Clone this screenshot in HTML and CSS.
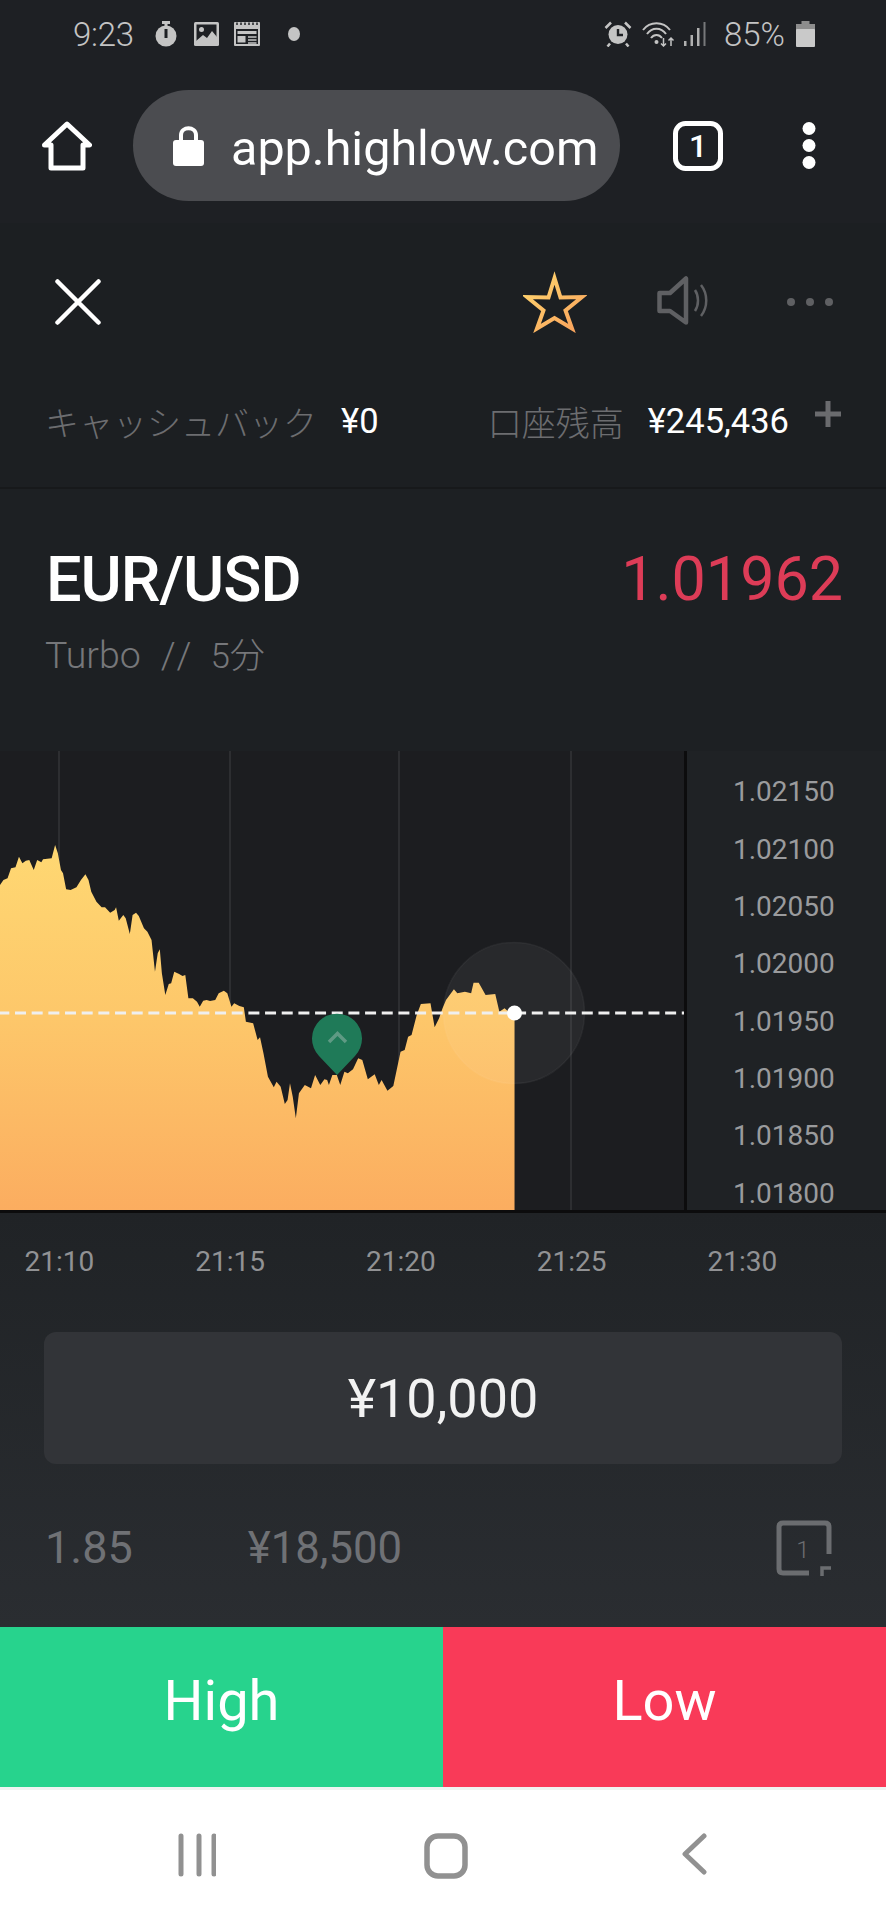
FILE: index.html
```html
<!DOCTYPE html>
<html lang="ja">
<head>
<meta charset="utf-8">
<title>EUR/USD Turbo</title>
<link rel="stylesheet" href="styles.css">
</head>
<body>
<div class="phone">
  <div class="status">
    <div class="status-group">
      <span class="clock">9:23</span>
      <svg class="st-icon i-watch" width="22" height="26" viewBox="0 0 22 26"><rect x="7" y="0" width="8" height="3" fill="#c4c4c4"/><rect x="9.5" y="2" width="3" height="4" fill="#c4c4c4"/><circle cx="11" cy="15" r="10.5" fill="#c4c4c4"/><rect x="9.5" y="8" width="3" height="9" fill="#1e2024"/></svg>
      <svg class="st-icon i-image" width="25" height="24" viewBox="0 0 25 24"><rect width="25" height="24" rx="1.5" fill="#c4c4c4"/><rect x="2.5" y="2.5" width="20" height="19" fill="#1e2024"/><circle cx="7.5" cy="7.5" r="2.5" fill="#c4c4c4"/><path d="M2 22 V19 L9 13 L13 16 L18 9 L23 15 V22 Z" fill="#c4c4c4"/></svg>
      <svg class="st-icon i-cal" width="26" height="24" viewBox="0 0 26 24"><rect width="26" height="24" rx="1" fill="#c4c4c4"/><rect x="2" y="7" width="22" height="15" fill="#1e2024"/><path d="M3 0.5 V3 M7 0.5 V3 M11 .5 V3 M15 .5 V3 M19 .5 V3 M23 .5 V3" stroke="#1e2024" stroke-width="1.5"/><rect x="3.5" y="9" width="19" height="3" fill="#c4c4c4"/><rect x="3.5" y="14" width="8" height="6.5" fill="#c4c4c4"/><path d="M14 15 H22.5 M14 18 H22.5 M14 21 H22.5" stroke="#c4c4c4" stroke-width="1.6"/></svg>
      <span class="st-dot"></span>
    </div>
    <div class="status-group">
      <svg class="st-icon i-alarm" width="28" height="26" viewBox="0 0 28 26"><circle cx="14" cy="13.500" r="9.500" fill="#c4c4c4"/><path d="M14 8 V14 H19" fill="none" stroke="#1e2024" stroke-width="2.400"/><path d="M1.500 7 L7 1.500 M26.500 7 L21 1.500 M6 22.500 L3.500 25.500 M22 22.500 L24.500 25.500" stroke="#c4c4c4" stroke-width="2.500" fill="none"/></svg>
      <svg class="st-icon i-wifi" width="33" height="26" viewBox="0 0 33 26" fill="none" stroke="#c4c4c4" stroke-width="2"><path d="M1 9 C8 0 21 0 28 9"/><path d="M5 13 C10 6 19 6 24 13"/><path d="M9 17 C12 13 17 13 20 17"/><circle cx="14.500" cy="21" r="2" fill="#c4c4c4" stroke="none"/><path d="M21.500 17 V25 M19 22.500 L21.500 25 L24 22.500 M29 25 V17 M26.500 19.500 L29 17 L31.500 19.500" stroke-width="1.500"/></svg>
      <svg class="st-icon i-signal" width="22" height="26" viewBox="0 0 22 26" fill="#b0b0b0"><rect x="0" y="20" width="2.500" height="5"/><rect x="6.500" y="14" width="2.500" height="11"/><rect x="13" y="7" width="2.500" height="18"/><rect x="19.500" y="1" width="2" height="24" fill="#77787a"/></svg>
      <span class="battery-text">85%</span>
      <svg class="st-icon i-batt" width="19" height="26" viewBox="0 0 19 26"><rect x="5.500" y="0" width="8" height="4" fill="#8d8d8d"/><rect x="0" y="3" width="19" height="6" fill="#8d8d8d"/><rect x="0" y="8" width="19" height="18" rx="1" fill="#c9c9c9"/></svg>
    </div>
  </div>

  <div class="toolbar">
    <svg class="tb-home" width="50" height="50" viewBox="0 0 50 50" fill="none" stroke="#fff" stroke-width="5" stroke-linejoin="round"><path d="M2.500 24 L25 3 L47.500 24 H41 V47 H9 V24 Z"/></svg>
    <div class="urlbar">
      <svg class="lock" width="31" height="41" viewBox="0 0 31 41"><path d="M8 18 V10 C8 1 23 1 23 10 V18" fill="none" stroke="#fff" stroke-width="4"/><rect x="0" y="15" width="31" height="26" rx="3" fill="#fff"/></svg>
      <span class="url">app.highlow.com</span>
    </div>
    <svg class="tb-tabs" width="50" height="50" viewBox="0 0 50 50"><rect x="2.500" y="2.500" width="45" height="45" rx="10" fill="none" stroke="#fff" stroke-width="5"/><text class="tab-num" x="25" y="36">1</text></svg>
    <svg class="tb-menu" width="14" height="47" viewBox="0 0 14 47" fill="#fff"><circle cx="7" cy="6.500" r="6.500"/><circle cx="7" cy="23.500" r="6.500"/><circle cx="7" cy="40.500" r="6.500"/></svg>
  </div>

  <div class="actions">
    <svg class="ac-close" width="46" height="46" viewBox="0 0 46 46" stroke="#fff" stroke-width="4.500" stroke-linecap="round"><path d="M2.500 2.500 L43.500 43.500 M43.500 2.500 L2.500 43.500"/></svg>
    <div class="ac-right">
      <svg class="ac-star" width="64" height="62" viewBox="522 270 64 62"><defs><linearGradient id="starG" x1="0" y1="0" x2="1" y2="1"><stop offset="0" stop-color="#ffd66e"/><stop offset="1" stop-color="#f9a25c"/></linearGradient></defs><polygon points="553.500,277 559.500,296.500 581,296 564.500,309.500 571,327.500 553.500,317 536,327.500 542.500,309.500 526,296 547.500,296.500" fill="none" stroke="url(#starG)" stroke-width="4" stroke-miterlimit="10"/></svg>
      <svg class="ac-sound" width="52" height="50" viewBox="656 276 52 50" fill="none" stroke="#5f6063"><path d="M658.500 293 H669 L685 278.500 V322.500 L669 311 H658.500 Z" stroke-width="4.500" stroke-linejoin="round"/><path d="M694 290 C698 296 698 305 694 311 M700 285 C707 294 707 307 700 316" stroke-width="2.500"/></svg>
      <svg class="ac-more" width="46" height="8" viewBox="0 0 46 8" fill="#5f6063"><circle cx="4" cy="4" r="4"/><circle cx="23" cy="4" r="4"/><circle cx="42" cy="4" r="4"/></svg>
    </div>
  </div>

  <div class="balance">
    <div class="bal-item">
      <span class="bal-label">キャッシュバック</span>
      <span class="bal-value">¥0</span>
    </div>
    <div class="bal-item">
      <span class="bal-label">口座残高</span>
      <span class="bal-value">¥245,436</span>
      <svg class="bal-plus" width="26" height="26" viewBox="0 0 26 26" stroke="#6a6b6e" stroke-width="5"><path d="M0 13 H26 M13 0 V26"/></svg>
    </div>
  </div>

  <div class="asset">
    <div class="asset-main">
      <h1 class="pair">EUR/USD</h1>
      <span class="price">1.01962</span>
    </div>
    <div class="asset-sub">Turbo<span class="sep">//</span><span class="dur">5分</span></div>
  </div>

  <div class="chart">
    <svg class="plot" width="684" height="461" viewBox="0 0 684 461">
      <defs>
        <linearGradient id="areaG" gradientUnits="userSpaceOnUse" x1="0" y1="-50" x2="0" y2="1180">
          <stop offset="0" stop-color="#ffdb74"/>
          <stop offset="0.5" stop-color="#fdc76a"/>
          <stop offset="1" stop-color="#fbab5f"/>
        </linearGradient>
      </defs>
      <g stroke="#2d2e31" stroke-width="2">
        <path d="M59 0 V461 M230 0 V461 M399 0 V461 M571 0 V461"/>
      </g>
      <g transform="translate(0 79) scale(0.3444 0.33333)">
        <path fill="url(#areaG)" d="M0 165 L10 150 22 145 32 115 45 112 55 80 65 100 75 92 85 90 98 120 108 90 120 97 125 88 150 85 160 45 168 70 177 120 183 130 192 178 205 180 222 172 235 150 248 133 257 150 265 185 280 215 295 232 305 232 320 248 333 240 337 232 345 272 358 255 365 265 377 312 385 255 395 248 403 258 418 295 428 305 440 330 450 425 458 370 464 358 470 430 480 495 490 462 497 460 506 425 520 432 530 438 538 435 547 505 560 505 572 515 580 530 590 512 600 510 610 513 625 510 635 490 650 482 660 490 672 530 680 520 695 528 708 532 714 575 735 580 748 630 755 622 765 670 778 740 795 772 803 755 815 770 827 822 835 810 842 760 850 800 859 865 868 790 885 765 903 775 915 735 930 765 942 748 950 750 955 765 965 735 978 735 988 765 1000 725 1010 730 1025 718 1040 685 1052 690 1068 748 1088 733 1100 765 1108 750 1125 782 1142 768 1163 665 1175 660 1185 620 1195 615 1210 555 1222 522 1250 520 1262 592 1275 565 1285 535 1295 510 1318 478 1328 490 1350 485 1368 490 1375 458 1390 458 1410 495 1438 492 1450 545 1465 535 1480 548 1494 548 L1494 1145 L0 1145 Z"/>
      </g>
      <circle cx="514" cy="262" r="70.500" fill="#ffffff" fill-opacity="0.055" stroke="#ffffff" stroke-opacity="0.05" stroke-width="1.500"/>
      <path d="M0 262 H684" stroke="#efefef" stroke-width="3" stroke-dasharray="11 5.670" stroke-dashoffset="1.670"/>
      <circle cx="514.500" cy="262" r="7.500" fill="#fff"/>
      <path d="M337 324 L319 305 A25 25 0 1 1 355 305 Z" fill="#1f7a58"/>
      <path d="M329 291 L337.500 282.500 L346 291" fill="none" stroke="#5f9a84" stroke-width="3.500"/>
    </svg>
    <div class="axis">
      <span>1.02150</span>
      <span>1.02100</span>
      <span>1.02050</span>
      <span>1.02000</span>
      <span>1.01950</span>
      <span>1.01900</span>
      <span>1.01850</span>
      <span>1.01800</span>
    </div>
  </div>

  <div class="panel">
    <div class="times">
      <span>21:10</span>
      <span>21:15</span>
      <span>21:20</span>
      <span>21:25</span>
      <span>21:30</span>
    </div>
    <div class="amount">¥10,000</div>
    <div class="payout">
      <span class="odds">1.85</span>
      <span class="return">¥18,500</span>
      <svg class="oneclick" width="56" height="57" viewBox="0 0 56 57" fill="none" stroke="#6b6d70"><path d="M53 34 V7 Q53 3 49 3 H7 Q3 3 3 7 V49 Q3 53 7 53 H33" stroke-width="5"/><path d="M46 56 V48 H55" stroke-width="3.500"/><text class="oc-num" x="27" y="38">1</text></svg>
    </div>
  </div>

  <div class="trade">
    <button class="btn btn-high">High</button>
    <button class="btn btn-low">Low</button>
  </div>

  <div class="navbar">
    <svg class="nav-recents" width="38" height="44" viewBox="0 0 38 44" stroke="#919191" stroke-width="5" stroke-linecap="round"><path d="M3 3 V41 M21 3 V41 M36 3 V41"/></svg>
    <svg class="nav-home" width="44" height="46" viewBox="0 0 44 46" fill="none" stroke="#919191" stroke-width="5.500"><rect x="3" y="3" width="38" height="40" rx="11"/></svg>
    <svg class="nav-back" width="26" height="42" viewBox="0 0 26 42" fill="none" stroke="#919191" stroke-width="5" stroke-linecap="round" stroke-linejoin="round"><path d="M23 3 L4 21 L23 39"/></svg>
  </div>
</div>
</body>
</html>
```
FILE: styles.css
```css
* { box-sizing: border-box; margin: 0; padding: 0; }

html, body { background: #1e2024; }

body {
  width: 886px;
  height: 1920px;
  overflow: hidden;
  font-family: Roboto, "Noto Sans CJK JP", sans-serif;
}

.phone {
  width: 886px;
  height: 1920px;
  display: flex;
  flex-direction: column;
  background: #1c1f22;
}

svg { display: block; flex: none; }

/* status bar */
.status {
  height: 66px;
  padding: 21px 71px 0 73px;
  display: flex;
  justify-content: space-between;
  align-items: flex-start;
  background: #1e2024;
  color: #c4c4c4;
}
.status-group { display: flex; align-items: center; height: 26px; }
.clock { font-size: 33px; font-weight: 300; width: 61px; letter-spacing: -0.3px; white-space: nowrap; }
.i-watch { margin-left: 21px; }
.i-image { margin-left: 17px; }
.i-cal { margin-left: 15px; }
.st-dot {
  width: 12px;
  height: 14px;
  border-radius: 50%;
  background: #c4c4c4;
  margin-left: 28px;
}
.i-wifi { margin-left: 10px; }
.i-signal { margin-left: 9px; }
.battery-text { font-size: 33px; font-weight: 300; margin-left: 18px; width: 62px; white-space: nowrap; }
.i-batt { margin-left: 10px; }

/* browser toolbar */
.toolbar {
  height: 157px;
  padding: 24px 0 22px 42px;
  display: flex;
  align-items: center;
  background: #1e2024;
}
.tb-home { margin-top: 1px; }
.urlbar {
  width: 487px;
  height: 111px;
  margin-left: 41px;
  padding-left: 40px;
  border-radius: 56px;
  background: #4b4c50;
  display: flex;
  align-items: center;
  gap: 27px;
}
.url { font-size: 48.500px; color: #fff; line-height: 111px; white-space: nowrap; padding-top: 6px; }
.tb-tabs { margin-left: 53px; margin-top: 1px; }
.tab-num { font: 500 32px Roboto, sans-serif; fill: #fff; text-anchor: middle; }
.tb-menu { margin-left: 79px; }

/* app actions */
.actions {
  height: 132px;
  padding: 56px 53px 0 55px;
  display: flex;
  justify-content: space-between;
  align-items: flex-start;
}
.ac-right { display: flex; align-items: flex-start; margin-top: -8px; }
.ac-sound { margin-left: 70px; margin-top: 5px; }
.ac-more { margin-left: 78px; margin-top: 27px; }

/* balances */
.balance {
  height: 134px;
  padding: 41px 45px 0;
  display: flex;
  justify-content: space-between;
  align-items: flex-start;
  border-bottom: 2px solid #17191b;
}
.bal-item { display: flex; align-items: center; height: 50px; }
.bal-label { font-size: 34px; font-weight: 300; color: #6c6d70; }
.bal-value { font-size: 34.500px; color: #fff; margin-left: 24px; }
.bal-plus { margin-left: 26px; margin-top: -14px; }

/* asset */
.asset {
  height: 262px;
  padding: 50px 43px 0 46px;
  background: #1d2023;
}
.asset-main { display: flex; justify-content: space-between; align-items: center; height: 80px; }
.pair { font-size: 63px; font-weight: 500; color: #fff; letter-spacing: -1px; }
.price { font-size: 61px; font-weight: 400; color: #dd3c57; }
.asset-sub { margin-top: 8px; font-size: 37.500px; font-weight: 300; color: #76777a; margin-left: -1px; }
.sep { margin: 0 14px 0 20px; letter-spacing: 5px; }
.dur { font-size: 35px; }

/* chart */
.chart {
  height: 462px;
  display: flex;
  border-bottom: 3px solid #0c0c0d;
  background: #1c1d20;
  overflow: hidden;
}
.axis {
  flex: 1;
  border-left: 3px solid #0c0c0d;
  background: #1f2225;
  padding: 12px 0 0 46px;
  display: grid;
  grid-auto-rows: 57.350px;
  align-items: center;
  font-size: 28px;
  color: #9a9b9d;
}

/* lower panel */
.panel {
  flex: 1;
  padding: 0 44px;
  background: linear-gradient(#202326, #2a2d31);
  display: flex;
  flex-direction: column;
}
.times {
  display: flex;
  gap: 101px;
  margin: 31px -44px 0;
  padding-left: 24.500px;
  font-size: 28px;
  color: #919294;
  height: 34px;
  align-items: center;
}
.amount {
  margin-top: 54px;
  height: 132px;
  border-radius: 12px;
  background: #323438;
  display: flex;
  align-items: center;
  justify-content: center;
  font-size: 54px;
  color: #f2f2f2;
}
.payout {
  margin-top: 55px;
  display: flex;
  align-items: center;
  font-size: 43.700px;
  color: #6f7175;
  height: 57px;
}
.odds { margin-left: 1px; font-size: 45px; }
.return { margin-left: 115px; }
.oneclick { margin-left: auto; margin-right: 10px; margin-top: 2px; }
.oc-num { font: 300 24px Roboto, sans-serif; fill: #6b6d70; stroke: none; text-anchor: middle; }

/* buttons */
.trade { height: 160px; display: flex; }
.btn {
  flex: 1;
  border: 0;
  padding-bottom: 12px;
  color: #fff;
  font: 400 56px Roboto, sans-serif;
}
.btn-high { background: #27d38d; }
.btn-low { background: #f93a58; }

/* nav bar */
.navbar {
  height: 133px;
  background: #fff;
  border-top: 3px solid #f0f4f2;
  padding: 43px 0 0 178px;
  display: flex;
  align-items: flex-start;
}
.nav-home { margin-left: 208px; }
.nav-back { margin-left: 213px; }
```
